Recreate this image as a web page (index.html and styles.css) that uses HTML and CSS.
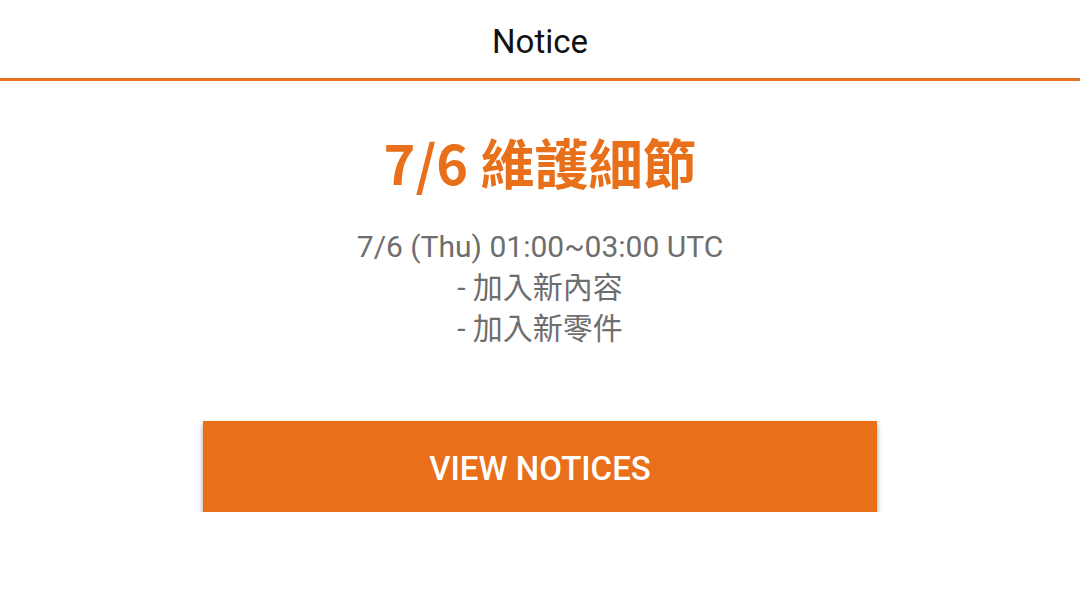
FILE: index.html
```
<!DOCTYPE html>
<html lang="zh-Hant">
<head>
    <meta charset="UTF-8" />
    <meta name="viewport" content="width=device-width, initial-scale=1.0" />
    <title>Notice</title>
    <link rel="stylesheet" href="styles.css">
</head>
<body>
    <header class="topbar">Notice</header>

    <main class="notice">
        <h1 class="notice-title">7/6 維護細節</h1>
        <div class="notice-body">
            <p>7/6 (Thu) 01:00~03:00 UTC</p>
            <p>- 加入新內容</p>
            <p>- 加入新零件</p>
        </div>
        <button type="button" class="notice-button">VIEW NOTICES</button>
    </main>
</body>
</html>
```

FILE: styles.css
```
body {
    margin: 0;
    background: #fff;
    font-family: Roboto, "Noto Sans CJK TC", sans-serif;
    color: #111;
}
.topbar {
    height: 74px;
    padding-top: 4px;
    display: flex;
    align-items: center;
    justify-content: center;
    font-size: 33px;
    color: #111;
    border-bottom: 3px solid #e8731f;
}
.notice {
    display: flex;
    flex-direction: column;
    align-items: center;
    text-align: center;
}
.notice-title {
    margin: 51px 0 0;
    font-family: "Noto Sans CJK TC", sans-serif;
    font-size: 54px;
    line-height: 60px;
    font-weight: bold;
    color: #e8701a;
}
.notice-body {
    margin-top: 34px;
    font-size: 30px;
    line-height: 41px;
    color: #6e6e6e;
}
.notice-body p {
    margin: 0;
}
.notice-button {
    margin-top: 72px;
    width: 674px;
    height: 91px;
    padding-top: 4px;
    border: none;
    background: #e96f1a;
    color: #fff;
    font-family: Roboto, sans-serif;
    font-size: 33px;
    font-weight: 500;
    box-shadow: 0 3px 5px rgba(0, 0, 0, 0.4);
    cursor: pointer;
}
```
